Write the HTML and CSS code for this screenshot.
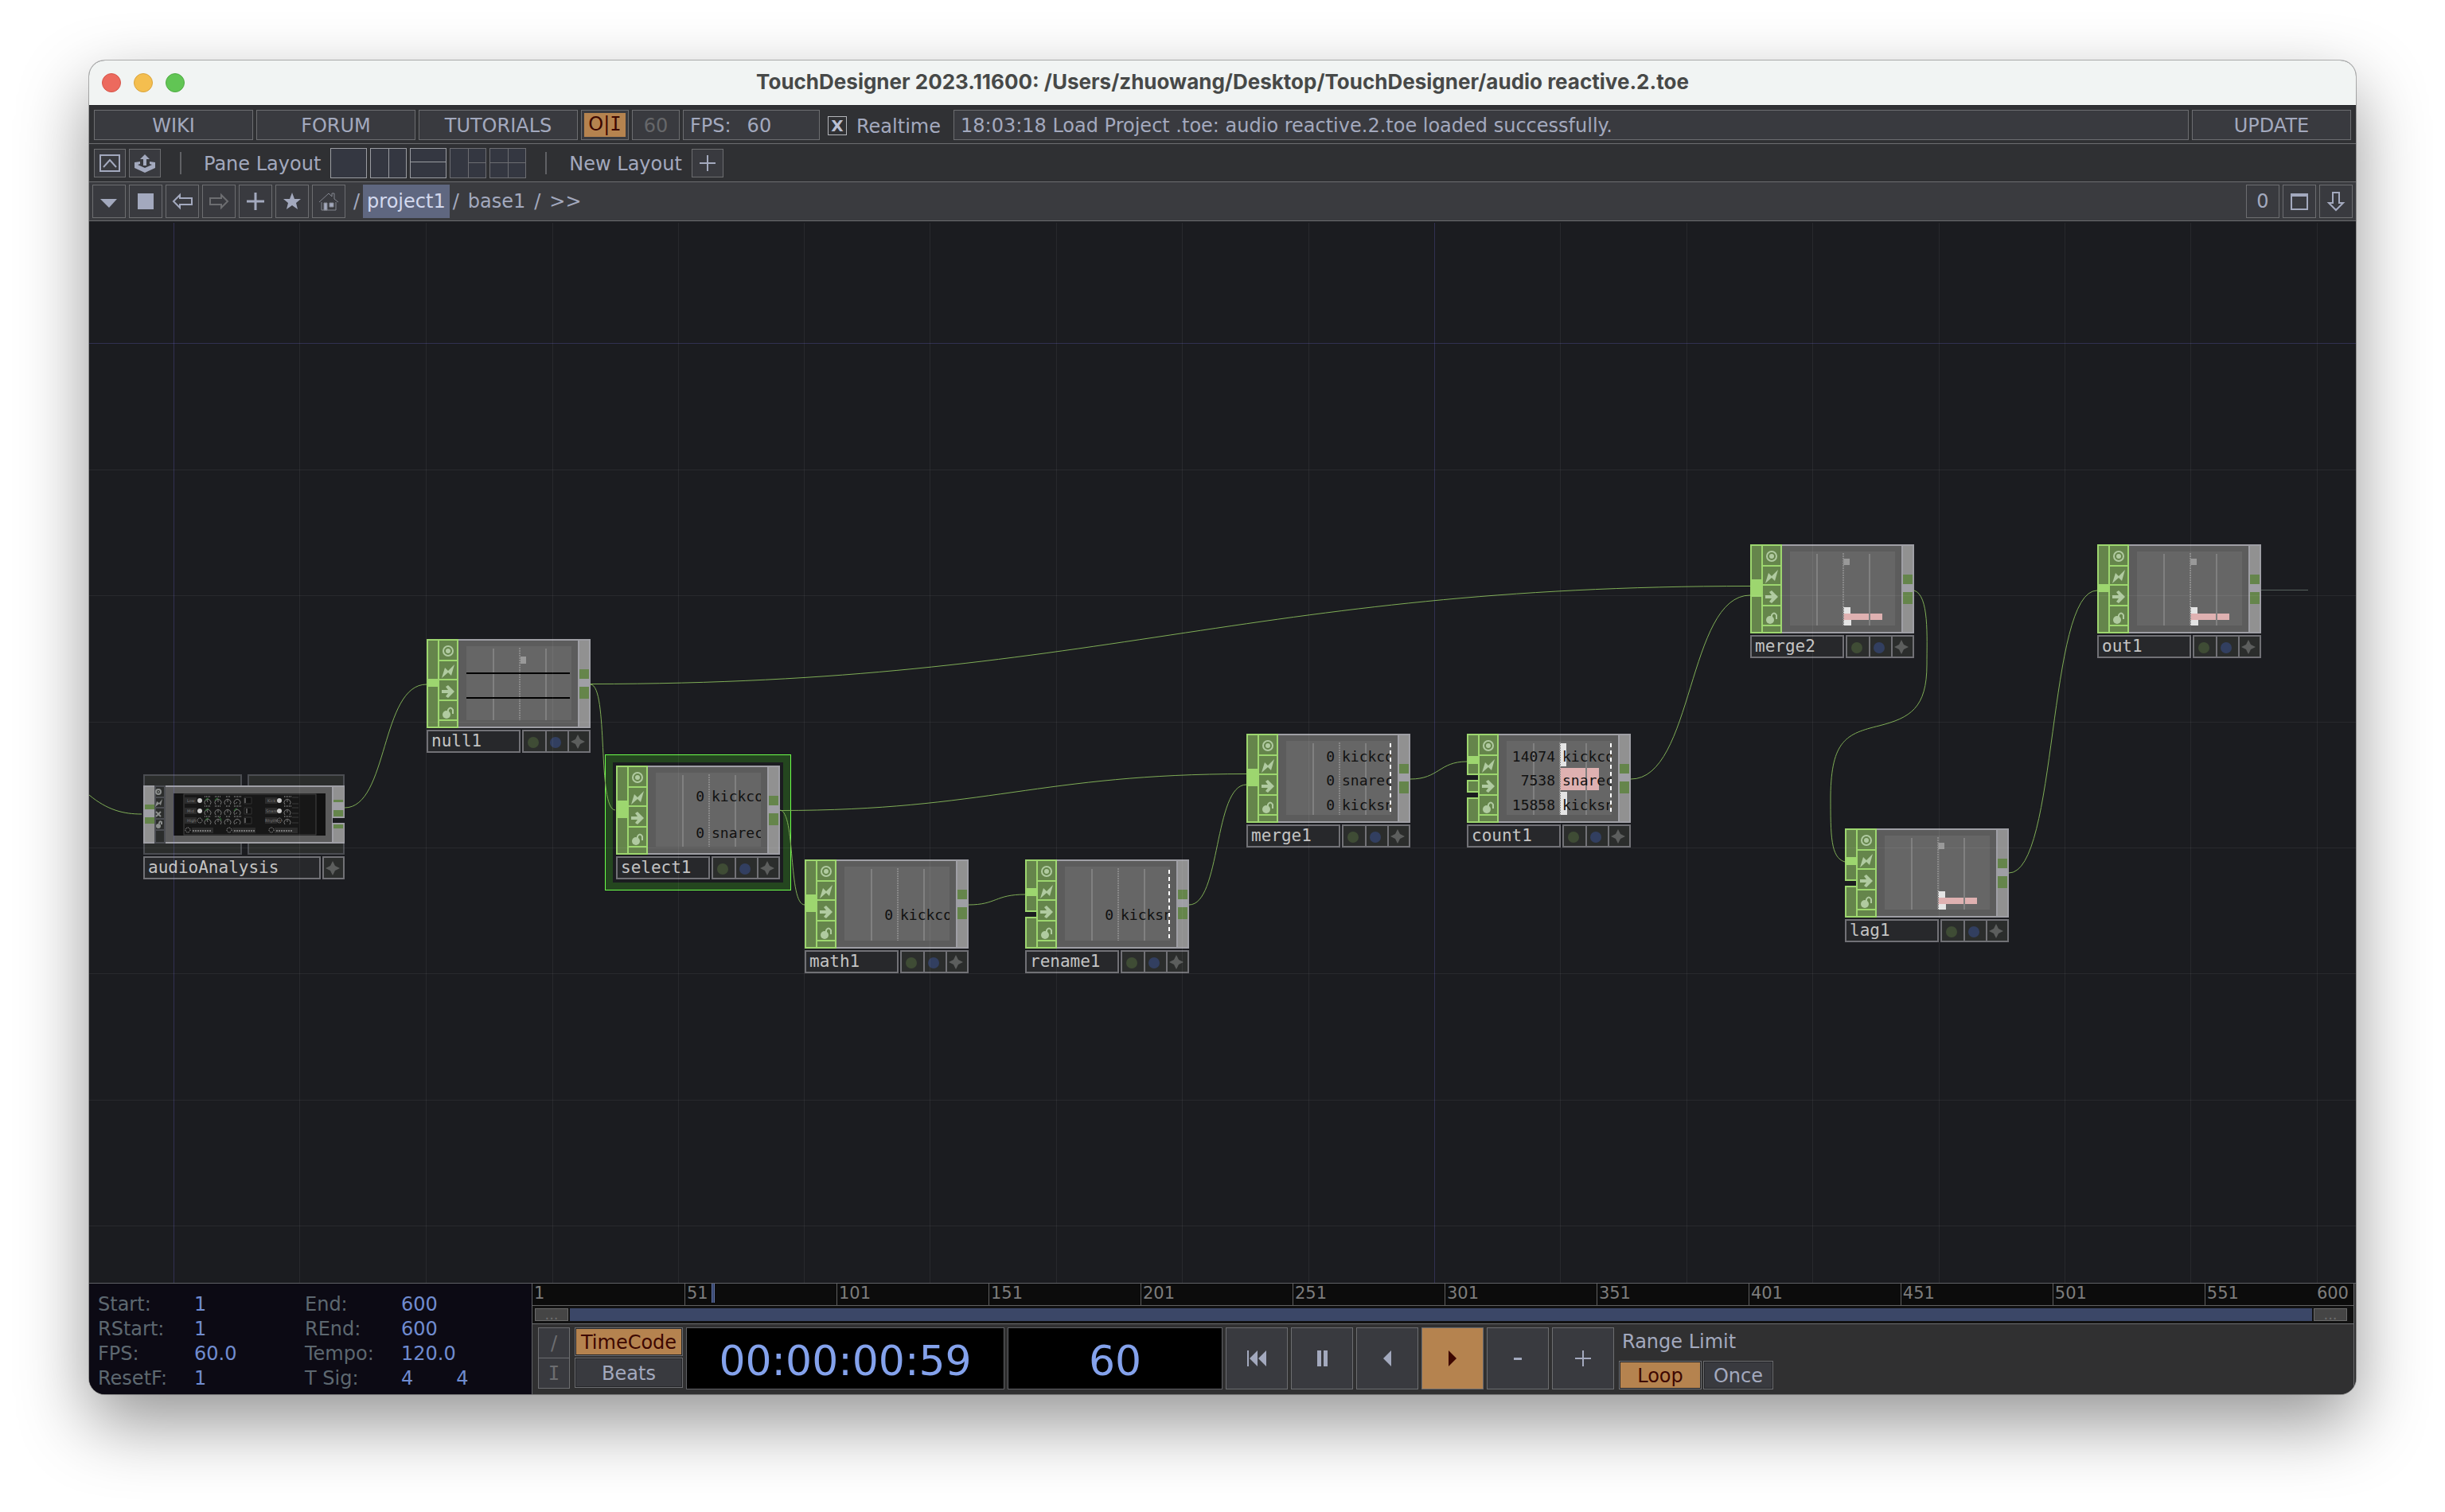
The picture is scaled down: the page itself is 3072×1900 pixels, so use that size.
FILE: index.html
```html
<!DOCTYPE html>
<html lang="en">
<head>
<meta charset="utf-8">
<title>TouchDesigner 2023.11600</title>
<link rel="stylesheet" href="styles.css">
</head>
<body>
<svg class="defs" aria-hidden="true">
  <symbol id="op-chrome" viewBox="0 0 206 112">
    <rect x="1" y="1" width="204" height="110" fill="#5c5c5c" stroke="#9f9fa5" stroke-width="2"/>
    <rect x="50" y="9" width="132" height="93" fill="#666"/>
    <rect x="190" y="0" width="16" height="112" fill="#9f9fa5"/>
    <rect x="192" y="2" width="12" height="108" fill="#919191"/>
    <rect x="192" y="38" width="12" height="37" fill="#65854b"/>
    <rect x="192" y="50" width="14" height="10" fill="#9f9fa5"/>
    <rect x="0" y="0" width="40" height="112" fill="#9dd66f"/>
    <path d="M2 2h12v108H2zM16 2h22v24H16zM16 28h22v22H16zM16 52h22v24H16zM16 78h22v23H16zM16 103h22v7H16z" fill="#65854b"/>
    <circle cx="27" cy="15" r="6" fill="none" stroke="#b0caa0" stroke-width="2"/>
    <circle cx="27" cy="15" r="3" fill="#b0caa0"/>
    <path d="M35 32L31 46 27 42 19 49 23 36 27 40z" fill="#b0caa0"/>
    <path d="M19 64h8l-3-4 3-2 8 8-8 8-3-2 3-4h-8z" fill="#b0caa0"/>
    <circle cx="25" cy="95" r="5" fill="#b0caa0"/>
    <path d="M27 91v-2q3-5 6 0v5" fill="none" stroke="#b0caa0" stroke-width="2"/>
  </symbol>
  <symbol id="view-grid" viewBox="0 0 206 112">
    <path d="M84 12v90M150 12v90" stroke="#808080" stroke-width="2"/>
    <path d="M117 11v91" stroke="#888" stroke-width="2" stroke-dasharray="2 1"/>
  </symbol>
  <symbol id="view-bars" viewBox="0 0 206 112">
    <rect x="117" y="18" width="8" height="8" fill="#999"/>
    <rect x="117" y="79" width="9" height="8" fill="#e4e4e4"/>
    <rect x="117" y="87" width="49" height="8" fill="#dfb1b1"/>
    <rect x="117" y="95" width="10" height="7" fill="#e4e4e4"/>
  </symbol>
  <symbol id="op-flags" viewBox="0 0 86 29">
    <rect x="1" y="1" width="84" height="27" fill="#2b2d2c" stroke="#717176" stroke-width="2"/>
    <path d="M30 0v29M58 0v29" stroke="#717176" stroke-width="2"/>
    <circle cx="14" cy="16" r="7" fill="#3f4c35"/>
    <circle cx="42" cy="16" r="7" fill="#323f60"/>
    <path d="M70 6l3 6 6 3-6 3-3 6-3-6-6-3 6-3z" fill="#5c5e5d"/>
  </symbol>
</svg>

<main class="window">
  <header class="titlebar">
    <div class="lights"><button class="light red" aria-label="Close"></button><button class="light amber" aria-label="Minimise"></button><button class="light green" aria-label="Zoom"></button></div>
    <h1>TouchDesigner 2023.11600: /Users/zhuowang/Desktop/TouchDesigner/audio reactive.2.toe</h1>
  </header>

  <nav class="bar bar-main">
    <button class="btn wide">WIKI</button>
    <button class="btn wide">FORUM</button>
    <button class="btn wide">TUTORIALS</button>
    <button class="btn toggle power"><span class="lit">O|<span class="mono">I</span></span></button>
    <button class="btn toggle dim">60</button>
    <div class="btn fps"><span>FPS:</span><output>60</output></div>
    <label class="realtime"><input type="checkbox" checked><span>Realtime</span></label>
    <output class="btn status">18:03:18 Load Project .toe: audio reactive.2.toe loaded successfully.</output>
    <button class="btn wide">UPDATE</button>
  </nav>

  <nav class="bar bar-layout">
    <button class="btn tool" aria-label="Palette"><svg width="38" height="34" viewBox="0 0 38 34" fill="none" stroke="#a3a9be" stroke-width="2"><rect x="7" y="7" width="24" height="20"/><path d="M11 22l8-9 8 9"/></svg></button>
    <button class="btn tool" aria-label="Upload"><svg width="38" height="34" viewBox="0 0 38 34" fill="#a3a9be"><path d="M19 6l6 6h-4v8h-4v-8h-4z"/><path d="M6 16l7-1v3l-3 1 9 4 9-4-3-1v-3l7 1v7l-13 6-13-6z"/></svg></button>
    <i class="sep"></i>
    <span class="caption">Pane Layout</span>
    <div class="panes">
      <button class="pane" aria-label="Single"></button>
      <button class="pane" aria-label="Left right"><svg width="44" height="36"><path d="M22 0v36"/></svg></button>
      <button class="pane" aria-label="Top bottom"><svg width="44" height="36"><path d="M0 16h44"/></svg></button>
      <button class="pane faint" aria-label="Left and two right"><svg width="44" height="36"><path d="M22 0v36M22 17h22"/></svg></button>
      <button class="pane faint" aria-label="Four"><svg width="44" height="36"><path d="M22 0v36M0 17h44"/></svg></button>
    </div>
    <i class="sep"></i>
    <span class="caption">New Layout</span>
    <button class="btn tool" aria-label="Add layout"><svg width="38" height="34" viewBox="0 0 38 34" stroke="#a3a9be" stroke-width="2"><path d="M19 7v20M9 17h20"/></svg></button>
  </nav>

  <nav class="bar bar-path">
    <button class="btn sq" aria-label="Pane type"><svg width="40" height="40" viewBox="0 0 40 40"><path d="M9 17h21l-10 11z" fill="#a3a9be"/></svg></button>
    <button class="btn sq" aria-label="Stop"><svg width="40" height="40" viewBox="0 0 40 40"><path d="M10 10h20v20H10z" fill="#a3a9be"/></svg></button>
    <button class="btn sq" aria-label="Back"><svg width="40" height="40" viewBox="0 0 40 40" fill="none" stroke="#a3a9be" stroke-width="2"><path d="M9 20l8-8v4h15v8H17v4z"/></svg></button>
    <button class="btn sq" aria-label="Forward"><svg width="40" height="40" viewBox="0 0 40 40" fill="none" stroke="#6c6d70" stroke-width="2"><path d="M31 20l-8-8v4H9v8h14v4z"/></svg></button>
    <button class="btn sq" aria-label="Add"><svg width="40" height="40" viewBox="0 0 40 40" stroke="#a3a9be" stroke-width="3"><path d="M20 9v22M9 20h22"/></svg></button>
    <button class="btn sq" aria-label="Bookmarks"><svg width="40" height="40" viewBox="0 0 40 40"><path d="M20 9l3 8h8l-6 5 2 8-7-5-7 5 2-8-6-5h8z" fill="#a3a9be"/></svg></button>
    <button class="btn sq" aria-label="Home"><svg width="40" height="40" viewBox="0 0 40 40" fill="none" stroke="#83868f" stroke-width="1"><path d="M11 21v10h18V21M8 21l12-11 4 4v-4h3v7l5 4"/><path d="M14 22h4v9h-4z" fill="#a3a9be"/><path d="M21 22h5v5h-5z" fill="#a3a9be"/></svg></button>
    <div class="crumbs"><span>/</span><a class="here" href="#">project1</a><span>/</span><a href="#">base1</a><span>/</span><a href="#">&gt;&gt;</a></div>
    <button class="btn sq">0</button>
    <button class="btn sq" aria-label="Maximise"><svg width="40" height="40" viewBox="0 0 40 40"><path d="M10 11h20v19H10z" fill="none" stroke="#a3a9be" stroke-width="2"/><path d="M9 10h22v4H9z" fill="#a3a9be"/></svg></button>
    <button class="btn sq" aria-label="Down"><svg width="40" height="40" viewBox="0 0 40 40" fill="none" stroke="#a3a9be" stroke-width="2"><path d="M16 9h8v13h5l-9 9-9-9h5z"/></svg></button>
  </nav>

  <section class="network" aria-label="Network editor">
    <article class="op comp at-audio">
      <svg class="body" width="253" height="101" viewBox="0 0 253 101">
        <g fill="#2b2d2c" stroke="#4b4d52" stroke-width="2"><path d="M1 1h122v99H1zM132 1h120v99H132z"/></g>
        <rect x="1" y="15" width="251" height="71" fill="#5c5c5c" stroke="#9f9fa5" stroke-width="2"/>
        <path d="M2 16h12v69H2zM239 16h13v69h-13z" fill="#919191"/>
        <path d="M238 14v73" stroke="#9f9fa5" stroke-width="2"/>
        <path d="M2 38h12v24H2zM239 32h12v21h-12zM239 63h12v5h-12z" fill="#65854b"/>
        <path d="M0 44h14v10H0zM239 35h14v10h-14zM239 53h14v2h-14zM239 61h14v2h-14z" fill="#9f9fa5"/>
        <path d="M238 55h15v6h-15z" fill="#1b1c20"/>
        <path d="M14 14h14v73H14z" fill="#4b4d52"/>
        <path d="M16 16h10v12H16zM16 30h10v11H16zM16 43h10v12H16zM16 57h10v12H16zM16 71h10v14H16z" fill="#2b2d2c"/>
        <g fill="none" stroke="#8c8f8e" stroke-width="2"><circle cx="19" cy="22" r="3"/><path d="M16 47l6 6M22 47l-6 6M20 62q0-4 3-2v3"/></g><circle cx="19" cy="22" r="1" fill="#8c8f8e"/><path d="M24 31l-2 8-2-2-5 4 2-7 3 2z" fill="#8c8f8e"/><circle cx="19" cy="65" r="3" fill="#8c8f8e"/>
        <rect x="38" y="24" width="191" height="53" fill="#111"/>
        <rect x="51" y="25" width="166" height="51" fill="#171717" stroke="#444"/>
        <g fill="#2c2c2c"><path d="M52 29h15v8H52zM52 42h15v8H52zM52 54h15v8H52zM153 29h15v8h-15zM153 42h15v8h-15zM153 54h15v8h-15zM61 67h27v7H61zM112 67h29v7h-29zM165 67h29v7h-29z"/></g>
        <g class="micro"><text x="55" y="35">Low</text><text x="55" y="48">Mid</text><text x="55" y="60">High</text><text x="156" y="35">Kick</text><text x="154" y="48">Snare</text><text x="153" y="60">Rhythm</text></g>
        <path d="M62 71h24M114 71h26M167 71h20" stroke="#777" stroke-width="2" stroke-dasharray="2 1"/>
        <g fill="#ccc"><circle cx="71" cy="33" r="3"/><circle cx="71" cy="46" r="3"/><circle cx="171" cy="33" r="3"/><circle cx="171" cy="46" r="3"/></g>
        <g fill="none" stroke="#bbb" stroke-dasharray="1 1"><circle cx="71" cy="58" r="3"/><circle cx="171" cy="58" r="3"/><circle cx="56" cy="70" r="3"/><circle cx="108" cy="70" r="3"/><circle cx="161" cy="70" r="3"/></g>
        <g fill="none" stroke="#777"><path id="knob-row" d="M78 38a4 4 0 1 1 6 0M81 35l-1-3M91 38a4 4 0 1 1 6 0M94 35v-3M103 38a4 4 0 1 1 6 0M106 35v-3M115 38a4 4 0 1 1 6 0M118 35l-2 2M178 38a4 4 0 1 1 6 0M181 35v-3"/><use href="#knob-row" y="13"/><use href="#knob-row" y="25"/></g>
        <path d="M78 33q1-3 4-3M90 33q1-3 4-3M78 46q1-3 4-3M114 46q1-3 4-3M78 58q1-3 4-3M95 54q3 1 3 4" fill="none" stroke="#2f7a35"/>
        <path d="M127 29h9v8h-9zM127 42h9v8h-9zM127 54h9v8h-9z" fill="#111" stroke="#333"/><path d="M128 30v6M130 43v6M128 55v6" stroke="#999"/>
        <path d="M77 28h8M90 28h7M104 28h5M114 28h9M77 40h8M90 40h7M104 40h5M114 40h9M77 53h8M90 53h7M104 53h5M114 53h9M177 28h9M177 40h9M177 53h9" stroke="#666" stroke-width="2" stroke-dasharray="1 1"/>
        <path d="M187 29h8M187 37h8M187 42h8M187 49h8M187 54h8M187 61h8" stroke="#3a3a3a"/>
      </svg>
      <footer><span class="name">audioAnalysis</span><svg width="28" height="29" viewBox="0 0 28 29"><rect x="1" y="1" width="26" height="27" fill="#2b2d2c" stroke="#717176" stroke-width="2"/><path d="M13 6l3 6 6 3-6 3-3 6-3-6-6-3 6-3z" fill="#5c5e5d"/></svg></footer>
    </article>

    <article class="op at-null">
      <svg class="body" width="206" height="112" viewBox="0 0 206 112"><use href="#op-chrome"/><use href="#view-grid"/><path d="M0 50h16v10H0z" fill="#9dd66f"/><path d="M118 22h7v9h-7z" fill="#999"/><path d="M50 43h130M50 74h130" stroke="#000" stroke-width="2"/></svg>
      <footer><span class="name">null1</span><svg width="86" height="29"><use href="#op-flags"/></svg></footer>
    </article>

    <article class="op selected at-select">
      <svg class="body" width="206" height="112" viewBox="0 0 206 112"><use href="#op-chrome"/><use href="#view-grid"/><path d="M0 44h16v22H0z" fill="#9dd66f"/>
        <svg width="182" height="112"><g class="chan"><text x="111" y="45" class="num">0</text><text x="120" y="45">kickco</text><text x="111" y="91" class="num">0</text><text x="120" y="91">snarec</text></g></svg></svg>
      <footer><span class="name">select1</span><svg width="86" height="29"><use href="#op-flags"/></svg></footer>
    </article>

    <article class="op at-math">
      <svg class="body" width="206" height="112" viewBox="0 0 206 112"><use href="#op-chrome"/><use href="#view-grid"/><path d="M0 44h16v22H0z" fill="#9dd66f"/>
        <svg width="182" height="112"><g class="chan"><text x="111" y="76" class="num">0</text><text x="120" y="76">kickco</text></g></svg></svg>
      <footer><span class="name">math1</span><svg width="86" height="29"><use href="#op-flags"/></svg></footer>
    </article>

    <article class="op at-rename">
      <svg class="body" width="206" height="112" viewBox="0 0 206 112"><use href="#op-chrome"/><use href="#view-grid"/><path d="M0 36h16v10H0zM0 64h14v10H0z" fill="#9dd66f"/><path d="M0 66h14v6H0z" fill="#1b1c20"/>
        <svg width="182" height="112"><g class="chan"><text x="111" y="76" class="num">0</text><text x="120" y="76">kicksn</text></g></svg><path class="dash" d="M181 13v88"/></svg>
      <footer><span class="name">rename1</span><svg width="86" height="29"><use href="#op-flags"/></svg></footer>
    </article>

    <article class="op at-merge1">
      <svg class="body" width="206" height="112" viewBox="0 0 206 112"><use href="#op-chrome"/><use href="#view-grid"/><path d="M0 44h16v22H0z" fill="#9dd66f"/>
        <svg width="182" height="112"><g class="chan"><text x="111" y="35" class="num">0</text><text x="120" y="35">kickco</text><text x="111" y="65" class="num">0</text><text x="120" y="65">snarec</text><text x="111" y="96" class="num">0</text><text x="120" y="96">kicksn</text></g></svg><path class="dash" d="M181 12v90"/></svg>
      <footer><span class="name">merge1</span><svg width="86" height="29"><use href="#op-flags"/></svg></footer>
    </article>

    <article class="op at-count">
      <svg class="body" width="206" height="112" viewBox="0 0 206 112"><use href="#op-chrome"/><path d="M117 12h8v29h-8zM117 73h9v29h-9z" fill="#e4e4e4"/><path d="M117 43h49v28h-49z" fill="#dfb1b1"/><use href="#view-grid"/><path d="M0 28h16v10H0zM0 50h14v10H0zM0 72h14v10H0z" fill="#9dd66f"/><path d="M0 52h14v6H0zM0 74h14v6H0z" fill="#1b1c20"/>
        <svg width="182" height="112"><g class="chan"><text x="111" y="35" class="num">14074</text><text x="120" y="35">kickco</text><text x="111" y="65" class="num">7538</text><text x="120" y="65">snarec</text><text x="111" y="96" class="num">15858</text><text x="120" y="96">kicksn</text></g></svg><path class="dash" d="M181 12v90"/></svg>
      <footer><span class="name">count1</span><svg width="86" height="29"><use href="#op-flags"/></svg></footer>
    </article>

    <article class="op at-merge2">
      <svg class="body" width="206" height="112" viewBox="0 0 206 112"><use href="#op-chrome"/><use href="#view-bars"/><use href="#view-grid"/><path d="M0 44h16v22H0z" fill="#9dd66f"/></svg>
      <footer><span class="name">merge2</span><svg width="86" height="29"><use href="#op-flags"/></svg></footer>
    </article>

    <article class="op at-lag">
      <svg class="body" width="206" height="112" viewBox="0 0 206 112"><use href="#op-chrome"/><use href="#view-bars"/><use href="#view-grid"/><path d="M0 36h16v10H0zM0 64h14v10H0z" fill="#9dd66f"/><path d="M0 66h14v6H0z" fill="#1b1c20"/></svg>
      <footer><span class="name">lag1</span><svg width="86" height="29"><use href="#op-flags"/></svg></footer>
    </article>

    <article class="op at-out">
      <svg class="body" width="206" height="112" viewBox="0 0 206 112"><use href="#op-chrome"/><use href="#view-bars"/><use href="#view-grid"/><path d="M0 50h16v10H0z" fill="#9dd66f"/></svg>
      <footer><span class="name">out1</span><svg width="86" height="29"><use href="#op-flags"/></svg></footer>
    </article>

    <svg class="overlay" width="2848" height="1334" viewBox="112 278 2848 1334" aria-hidden="true">
      <g fill="none" stroke="#7fad56" stroke-width="1">
        <path d="M112 999C135 1018 155 1023 178 1023"/>
        <path d="M433 1015C488 1015 478 860 536 860"/>
        <path d="M742 859.5C1380 859.5 1560 736.5 2199 736.5"/>
        <path d="M742 860C765 862 750 1017 773 1018"/>
        <path d="M980 1018.5C1240 1018.5 1306 972.5 1566 972.5"/>
        <path d="M980 1018C1000 1020 990 1137 1011 1137"/>
        <path d="M1217 1137C1252 1137 1250 1124 1288 1124"/>
        <path d="M1494 1137C1534 1137 1525 986 1566 986"/>
        <path d="M1772 979C1808 979 1808 957 1843 957"/>
        <path d="M2049 979C2128 979 2120 748 2199 748"/>
        <path d="M2405 742C2424 748 2421 800 2421 835C2421 890 2400 902 2361 912C2320 922 2301 930 2300 1000C2300 1050 2300 1078 2318 1083"/>
        <path d="M2524 1097C2586 1097 2572 742 2635 742"/>
        <path d="M2841 741.5H2900" stroke="#56605c"/>
      </g>
      <path d="M376.5 280V1612M535.5 280V1612M694.5 280V1612M852.5 280V1612M1010.5 280V1612M1168.5 280V1612M1327.5 280V1612M1485.5 280V1612M1644.5 280V1612M1960.5 280V1612M2119.5 280V1612M2277.5 280V1612M2436.5 280V1612M2594.5 280V1612M2752.5 280V1612M2911.5 280V1612M112 590.5H2960M112 748.5H2960M112 907.5H2960M112 1065.5H2960M112 1223.5H2960M112 1382.5H2960M112 1540.5H2960" stroke="#fff" stroke-opacity="0.06"/>
      <path d="M218.5 280V1612M1802.5 280V1612M112 431.5H2960" stroke="#8080ff" stroke-opacity="0.22"/>
    </svg>
  </section>

  <section class="dock">
    <dl class="info">
      <dt>Start:</dt><dd>1</dd><dt>End:</dt><dd>600</dd>
      <dt>RStart:</dt><dd>1</dd><dt>REnd:</dt><dd>600</dd>
      <dt>FPS:</dt><dd>60.0</dd><dt>Tempo:</dt><dd>120.0</dd>
      <dt>ResetF:</dt><dd>1</dd><dt>T Sig:</dt><dd class="pair"><span>4</span><span>4</span></dd>
    </dl>
    <div class="timeline">
      <div class="ruler">
        <span>1</span><span>51</span><span>101</span><span>151</span><span>201</span><span>251</span><span>301</span><span>351</span><span>401</span><span>451</span><span>501</span><span class="last">551<b>600</b></span>
        <i class="playhead"></i>
      </div>
      <div class="range"><button class="grip">...</button><div class="span"></div><button class="grip">...</button></div>
      <div class="controls">
        <div class="modes"><button class="btn">/</button><button class="btn mono">I</button></div>
        <div class="units"><button class="btn on">TimeCode</button><button class="btn">Beats</button></div>
        <output class="display code">00:00:00:59</output>
        <output class="display frame">60</output>
        <button class="btn play" aria-label="Rewind"><svg width="24" height="20"><path d="M0 0h2v20H0zM13 0v20L3 10zM24 0v20L14 10z" fill="#a3a9be"/></svg></button>
        <button class="btn play" aria-label="Pause"><svg width="13" height="20"><path d="M0 0h5v20H0zM8 0h5v20H8z" fill="#a3a9be"/></svg></button>
        <button class="btn play" aria-label="Play backwards"><svg width="10" height="20"><path d="M10 0v20L0 10z" fill="#a3a9be"/></svg></button>
        <button class="btn play on" aria-label="Play"><svg width="10" height="20"><path d="M0 0v20l10-10z" fill="#3d0700"/></svg></button>
        <button class="btn play" aria-label="Step back"><svg width="10" height="20"><path d="M0 9h10v3H0z" fill="#a3a9be"/></svg></button>
        <button class="btn play" aria-label="Step forward"><svg width="20" height="20"><path d="M9 0h2v20H9zM0 9h20v2H0z" fill="#a3a9be"/></svg></button>
        <div class="limit"><span>Range Limit</span><div class="choices"><button class="btn on">Loop</button><button class="btn">Once</button></div></div>
      </div>
    </div>
  </section>
</main>
</body>
</html>
```
FILE: styles.css
```css
* { box-sizing: border-box; }

body {
  margin: 0;
  min-height: 100vh;
  padding: 76px 112px 148px;
  display: flex;
  background: #fff;
  color: #a3a9be;
  font: 24px/28px "DejaVu Sans", Verdana, sans-serif;
}

button { font: inherit; color: inherit; padding: 0; margin: 0; }
a { color: inherit; text-decoration: none; }
svg { display: block; flex: none; }
.defs { position: absolute; width: 0; height: 0; }
.mono { font-family: "DejaVu Sans Mono", monospace; }

.window {
  flex: 1;
  min-width: 0;
  display: flex;
  flex-direction: column;
  border-radius: 20px;
  overflow: hidden;
  background: #303134;
  box-shadow: 0 0 0 1px rgba(0, 0, 0, .28), 0 36px 88px rgba(0, 0, 0, .42);
}

/* Title bar */
.titlebar {
  display: grid;
  grid-template-columns: 120px 1fr 120px;
  align-items: center;
  height: 56px;
  padding: 0 16px;
  background: #f1f4f3;
}
.titlebar h1 {
  margin: 0;
  padding-bottom: 2px;
  text-align: center;
  color: #474948;
  font: 700 26px/32px Inter, sans-serif;
  white-space: nowrap;
}
.lights { display: flex; gap: 16px; }
.light { width: 24px; height: 24px; border-radius: 50%; border: 1px solid; }
.red { background: #ec6a5e; border-color: #d65549; }
.amber { background: #f4be4f; border-color: #d9a43c; }
.green { background: #61c554; border-color: #4fab43; }

/* Tool bars */
.bar {
  display: flex;
  align-items: center;
  gap: 4px;
  border-bottom: 1px solid #6c6d70;
  white-space: nowrap;
}
.bar-main { height: 49px; padding: 0 6px; border-top: 1px solid #232428; }
.bar-layout { height: 48px; padding: 0 6px; background: #2f3033; }
.bar-path { height: 49px; padding: 0 4px; background: #3a3b3f; }

.btn {
  display: flex;
  align-items: center;
  justify-content: center;
  border: 1px solid #6c6d70;
  border-radius: 0;
  background: #393a3f;
}
.bar-main .btn { height: 38px; padding-top: 3px; }
.bar-main .power { padding-top: 0; }
.wide { width: 200px; }
.toggle { width: 60px; }
.dim { color: #66676a; }
.lit { width: 52px; height: 30px; background: #b5834f; color: #3d0700; }
.bar-main .fps { width: 172px; justify-content: flex-start; gap: 20px; padding-left: 8px; }
.realtime { width: 160px; padding-left: 6px; display: flex; align-items: center; gap: 12px; }
.realtime span { padding-top: 4px; }
.realtime input {
  appearance: none;
  width: 24px;
  height: 24px;
  margin: 2px 0 0;
  border: 1px solid #b4b6bb;
  display: grid;
  place-items: center;
}
.realtime input:checked::before { content: "X"; font: 700 20px/22px "DejaVu Sans", sans-serif; color: #b9bfd3; }
.bar-main .status { flex: 1; justify-content: flex-start; padding-left: 8px; }

.tool { width: 40px; height: 36px; }
.sep { width: 2px; height: 28px; margin: 0 20px; background: #606165; }
.sep + .caption { margin-left: 4px; }
.caption { padding-top: 2px; }
.caption + * { margin-left: 8px; }
.panes { display: flex; gap: 4px; }
.pane { width: 46px; height: 38px; border: 1px solid #9a9ca1; background: #343741; }
.pane svg { stroke: #9a9ca1; stroke-width: 1; shape-rendering: crispEdges; }
.pane.faint { border-color: #6c6d72; }
.pane.faint svg { stroke: #6c6d72; }

.sq { width: 42px; height: 42px; }
.crumbs { flex: 1; display: flex; align-items: center; gap: 4px; padding-left: 6px; }
.crumbs a { line-height: 42px; padding: 0 7px; }
.crumbs .here { background: #5f6780; color: #d3d9ee; padding: 0 5px; }

/* Network editor */
.network { position: relative; flex: 1; min-height: 1000px; overflow: hidden; background: #1b1c20; }
.op { position: absolute; width: 206px; }
.comp { width: 253px; }
.op footer { display: flex; gap: 2px; margin-top: 2px; height: 29px; }
.name {
  flex: 1;
  border: 2px solid #717176;
  background: #27282b;
  color: #c4c4c4;
  padding-left: 4px;
  font: 21px/25px "DejaVu Sans Mono", monospace;
}
.selected::before {
  content: "";
  position: absolute;
  inset: -14px;
  border: 1px solid #6cff4a;
  box-shadow: inset 0 0 0 9px #24461f;
}
.chan { font: 18px "DejaVu Sans Mono", monospace; fill: #111; }
.num { text-anchor: end; }
.micro { font: 5px "DejaVu Sans", sans-serif; fill: #777; }
.dash { stroke: #fff; stroke-width: 2; stroke-dasharray: 5 4; }
.overlay { position: absolute; left: 0; top: 0; pointer-events: none; }

.at-audio { left: 68px; top: 695px; }
.at-null { left: 424px; top: 525px; }
.at-select { left: 662px; top: 684px; }
.at-math { left: 899px; top: 802px; }
.at-rename { left: 1176px; top: 802px; }
.at-merge1 { left: 1454px; top: 644px; }
.at-count { left: 1731px; top: 644px; }
.at-merge2 { left: 2087px; top: 406px; }
.at-lag { left: 2206px; top: 763px; }
.at-out { left: 2523px; top: 406px; }

/* Timeline dock */
.dock { display: flex; height: 140px; border-top: 1px solid #606165; background: #303031; }
.info {
  width: 557px;
  margin: 0;
  padding: 12px 12px 0 11px;
  display: grid;
  grid-template-columns: 121px 139px 121px 1fr;
  grid-auto-rows: 31px;
  background: #0c0a14;
  border-right: 1px solid #606165;
}
.info dt { color: #5d6870; }
.info dd { margin: 0; color: #708cd0; }
.pair { display: flex; gap: 54px; }
.timeline { flex: 1; min-width: 0; margin-right: 2px; display: flex; flex-direction: column; border-right: 1px solid #6c6d70; }
.ruler {
  position: relative;
  display: grid;
  grid-template-columns: repeat(11, 50fr) 49fr;
  height: 28px;
  background: #0c0c0c;
  border-bottom: 1px solid #606060;
  color: #7d7d7d;
  font-size: 21px;
  line-height: 25px;
}
.ruler span { padding-left: 2px; border-left: 1px solid #606060; }
.ruler span:first-child { border-left: 0; }
.ruler .last { display: flex; justify-content: space-between; padding-right: 6px; }
.ruler b { font-weight: 400; }
.playhead { position: absolute; left: 225px; top: 0; width: 4px; height: 24px; background: #35456f; border: solid #6474a4; border-width: 0 1px; }
.range { display: flex; gap: 2px; height: 23px; padding: 3px 8px 3px 3px; background: #111; border-bottom: 1px solid #6c6d70; }
.grip { width: 42px; border: 1px solid #6a6a6a; background: #454545; color: #6e6e6e; font-size: 18px; line-height: 10px; }
.span { flex: 1; background: #3b4767; }
.controls { display: flex; gap: 4px; padding: 4px 7px 0; height: 88px; }
.modes { width: 40px; height: 76px; display: grid; grid-template-rows: 39px 38px; color: #6c6d70; }
.modes .btn + .btn { border-top: 0; }
.units { width: 136px; margin-left: 2px; display: grid; grid-template-rows: 36px 38px; gap: 2px; height: 76px; }
.btn.on { background: #b5834f; color: #3d0700; }
.units .btn, .limit .btn { padding-top: 2px; box-shadow: inset 0 0 0 1px #25262a; }
.display {
  height: 78px;
  padding-top: 6px;
  display: flex;
  align-items: center;
  justify-content: center;
  border: 1px solid #606165;
  background: #000;
  color: #84a2ec;
  font-size: 52px;
  line-height: 60px;
}
.code { width: 400px; }
.frame { width: 270px; }
.play { width: 78px; height: 78px; }
.limit { display: flex; flex-direction: column; justify-content: space-between; height: 78px; padding-left: 2px; }
.limit > span { padding: 4px 0 0 4px; }
.choices { display: flex; gap: 2px; }
.limit .btn { width: 88px; height: 36px; }
.limit .on { width: 104px; }
```
